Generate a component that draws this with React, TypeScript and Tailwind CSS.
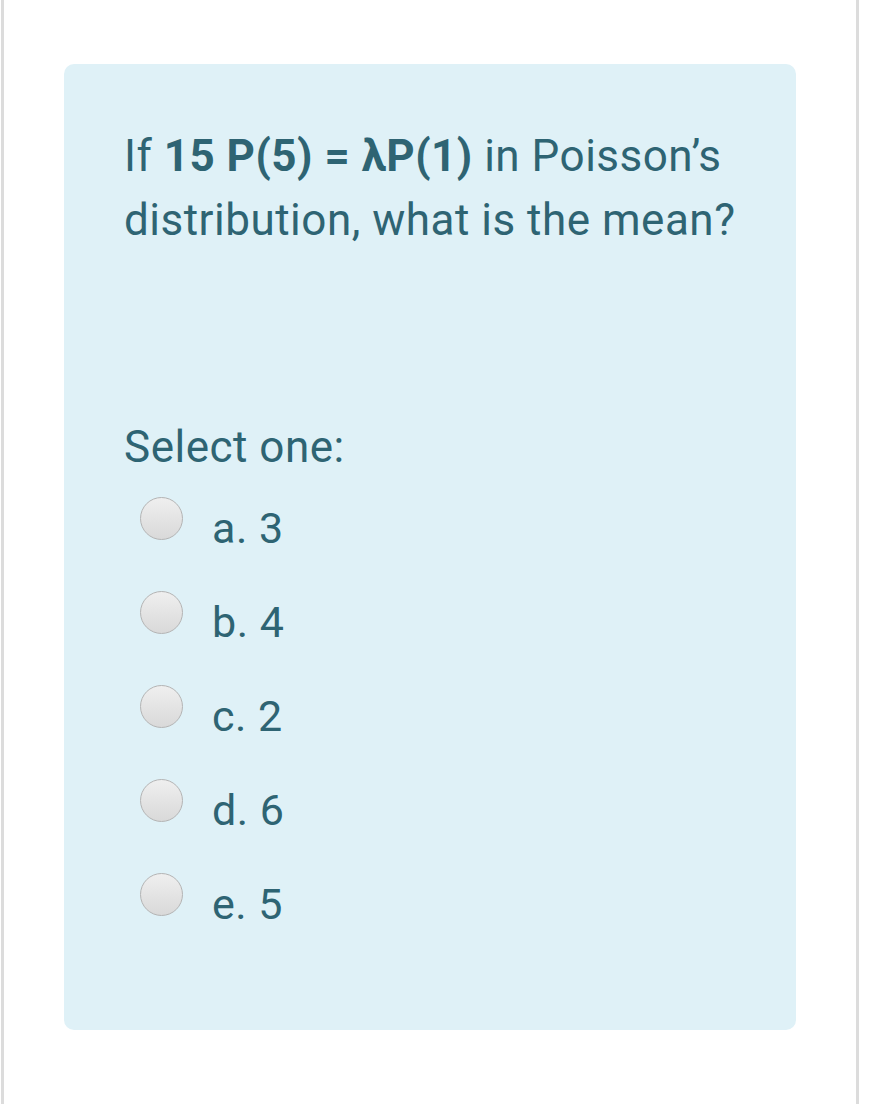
import React from "react";

const options = ["a. 3", "b. 4", "c. 2", "d. 6", "e. 5"];

function Radio() {
  return (
    <span className="block w-[43px] h-[43px] rounded-full border-[1.5px] border-[#b4b4b4] bg-gradient-to-b from-[#efefef] to-[#d9d9d9] shrink-0" />
  );
}

export default function App() {
  return (
    <div
      className="w-[880px] h-[1104px] bg-white flex"
      style={{ fontFamily: "Roboto, 'Liberation Sans', sans-serif" }}
    >
      <div className="w-[858px] h-full ml-[1px] border-x-[3px] border-[#dcdcdc] pt-[64px] pl-[60px] pr-[60px]">
        <div className="w-[732px] h-[966px] bg-[#dff1f7] rounded-[10px] pl-[60px] pt-[60px] text-[#2e6473]">
          <p className="text-[44px] leading-[64px] tracking-[0.5px]">
            If <b className="font-bold">15 P(5) = λP(1)</b> in Poisson’s distribution, what is the mean?
          </p>
          <p className="text-[44px] leading-[64px] tracking-[0.5px] mt-[163px]">Select one:</p>
          <div className="flex flex-col mt-[18px]">
            {options.map((o) => (
              <div key={o} className="flex items-start h-[94px] pl-[16px]">
                <Radio />
                <span className="ml-[29px] mt-[7px] text-[43px] leading-[48px] tracking-[0.5px]">{o}</span>
              </div>
            ))}
          </div>
        </div>
      </div>
    </div>
  );
}
